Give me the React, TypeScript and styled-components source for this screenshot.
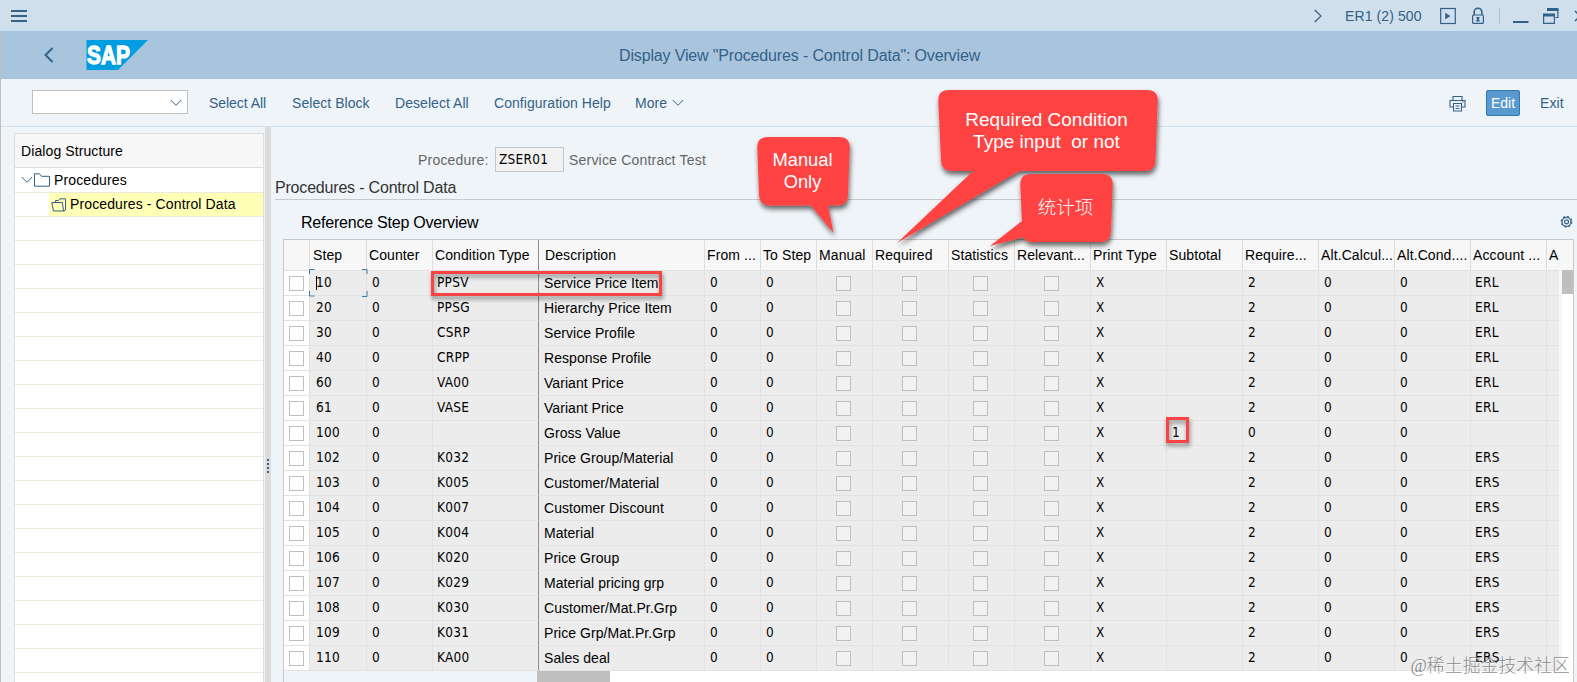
import React from 'react';
import styled, { createGlobalStyle } from 'styled-components';

const Global = createGlobalStyle`
  * { box-sizing: border-box; }
  html, body { margin: 0; overflow: hidden; }
  body { font-family: "Liberation Sans", Arial, sans-serif; font-size: 14px; letter-spacing: 0.1px; color: #000; }
`;

const ink = '#346187';

const Window = styled.div`
  position: relative;
  display: flex;
  flex-direction: column;
  width: 1577px;
  height: 682px;
  background: #eff4f8;
  overflow: hidden;
`;

const TitleBar = styled.header`
  display: flex;
  align-items: center;
  justify-content: space-between;
  flex: none;
  height: 31px;
  padding-left: 11px;
  background: #cfdfec;
  color: ${ink};
`;

const Burger = styled.div`
  display: flex;
  flex-direction: column;
  gap: 3px;
  width: 16px;
  padding-top: 1px;
`;

const BurgerLine = styled.i`
  height: 2px;
  background: ${ink};
`;

const SystemArea = styled.div`
  display: flex;
  align-items: center;
  height: 31px;
  padding-top: 1px;
`;

const SystemName = styled.span`
  width: 95px;
  padding-left: 23px;
  box-sizing: content-box;
  white-space: nowrap;
`;

const Frame = styled.div`
  display: flex;
  flex-direction: column;
  flex: 1;
  min-height: 0;
  border-left: 1px solid #bfbfbf;
`;

const ViewHeader = styled.div`
  display: grid;
  grid-template-columns: 85px 62px 1fr;
  align-items: center;
  flex: none;
  height: 48px;
  background: #a9c5de;
  color: ${ink};
`;

const BackButton = styled.button`
  display: flex;
  justify-content: flex-end;
  width: 53px;
  padding: 0;
  border: 0;
  background: none;
`;

const ViewTitle = styled.h1`
  margin: 0;
  padding: 2px 0 0 471px;
  font-size: 16px;
  font-weight: 400;
  letter-spacing: -0.15px;
  white-space: nowrap;
`;

const Toolbar = styled.div`
  display: flex;
  align-items: flex-start;
  flex: none;
  height: 48px;
  padding: 11px 0 0 31px;
  border-bottom: 1px solid #cfdfec;
  color: ${ink};
`;

const Combo = styled.div`
  display: flex;
  align-items: center;
  justify-content: flex-end;
  width: 156px;
  height: 24px;
  margin-right: 21px;
  padding: 2px 5px 0 0;
  border: 1px solid #bfbfbf;
  background: #fff;
`;

const ToolLink = styled.span<{ $width: number; $tight?: boolean }>`
  display: flex;
  align-items: center;
  gap: 5px;
  flex: none;
  width: ${p => p.$width}px;
  height: 26px;
  letter-spacing: ${p => (p.$tight ? '-0.05px' : '0.05px')};
  white-space: nowrap;
`;

const ToolEnd = styled.div`
  display: flex;
  align-items: center;
  height: 26px;
  margin-left: auto;
`;

const EditButton = styled.button`
  width: 34px;
  height: 26px;
  margin: 0 20px 0 20px;
  padding: 0;
  border: 1px solid #3079b4;
  border-radius: 2px;
  background: #5899d0;
  color: #fff;
  font: inherit;
`;

const ExitLink = styled.span`
  width: 37px;
`;

const Body = styled.div`
  display: flex;
  flex: 1;
  min-height: 0;
`;

const TreePane = styled.aside`
  display: flex;
  flex-direction: column;
  flex: none;
  width: 250px;
  margin: 6px 1px 0 13px;
  border: solid #dedede;
  border-width: 1px 1px 0 1px;
  background: #fff;
`;

const TreeTitle = styled.div`
  display: flex;
  align-items: center;
  flex: none;
  height: 34px;
  padding: 1px 0 0 6px;
  border-bottom: 1px solid #dedede;
  background: #f7f7f7;
  white-space: nowrap;
`;

const TreeRow = styled.div<{ $first?: boolean }>`
  display: flex;
  flex: none;
  height: ${p => (p.$first ? 25 : 24)}px;
  border-bottom: 1px solid #ebebdc;
  letter-spacing: 0.12px;
`;

const TreeItem = styled.div<{ $indent: number; $gap: number; $selected?: boolean }>`
  display: flex;
  align-items: center;
  flex: 1;
  gap: ${p => p.$gap}px;
  margin-left: ${p => p.$indent}px;
  padding-left: 2px;
  background: ${p => (p.$selected ? '#ffffb8' : 'transparent')};
  white-space: nowrap;
`;

const TreeText = styled.span<{ $raise?: boolean }>`
  margin-left: ${p => (p.$raise ? 1 : 3)}px;
  padding-bottom: ${p => (p.$raise ? 2 : 0)}px;
`;

const Splitter = styled.div`
  display: flex;
  flex-direction: column;
  align-items: center;
  gap: 2px;
  flex: none;
  width: 6px;
  padding-top: 332px;
  background: #dcdcdc;
`;

const Grip = styled.i`
  width: 2px;
  height: 2px;
  background: ${ink};
`;

const Content = styled.main`
  display: flex;
  flex-direction: column;
  flex: 1;
  min-width: 0;
`;

const FieldRow = styled.div`
  display: flex;
  align-items: center;
  flex: none;
  height: 25px;
  margin: 20px 0 0 147px;
  color: #666;
  white-space: nowrap;
`;

const FieldLabel = styled.label`
  width: 77px;
  letter-spacing: 0.2px;
`;

const monoText = `
  font-family: "DejaVu Sans Condensed", "DejaVu Sans", sans-serif;
  font-stretch: condensed;
  font-size: 13.5px;
  letter-spacing: 0.28px;
`;

const Field = styled.div`
  ${monoText}
  width: 69px;
  height: 25px;
  margin-right: 5px;
  padding-left: 3px;
  border: 1px solid #c6c6c6;
  background: #f2f2f2;
  color: #000;
  line-height: 22px;
`;

const FieldText = styled.span`
  letter-spacing: 0.2px;
`;

const GroupTitle = styled.h2`
  flex: none;
  height: 28px;
  margin: 0 0 0 4px;
  padding-top: 6px;
  border-bottom: 1px solid #c6c9cc;
  color: #333;
  font-size: 16px;
  line-height: 19px;
  font-weight: 400;
  letter-spacing: -0.19px;
`;

const TableTitle = styled.div`
  display: flex;
  align-items: center;
  justify-content: space-between;
  flex: none;
  height: 39px;
  padding: 6px 4px 0 30px;
  font-size: 16px;
  letter-spacing: -0.22px;
`;

const TableBox = styled.section`
  display: grid;
  grid-template-columns: 1275px 3px 11px;
  grid-template-rows: 431px 12px;
  width: 1291px;
  margin-left: 12px;
  border: solid #c6c9cc;
  border-width: 1px 1px 0 1px;
  flex: none;
`;

const Grid = styled.div`
  overflow: hidden;
`;

const HeadRow = styled.div`
  display: flex;
  height: 31px;
  border-bottom: 1px solid #e2e2e2;
  background: #f7f7f7;
`;

const HeadCell = styled.div<{ $w: number; $strong?: boolean; $pad: number }>`
  flex: none;
  width: ${p => p.$w}px;
  height: 30px;
  padding-left: ${p => p.$pad}px;
  border-right: 1px solid ${p => (p.$strong ? '#8c8c8c' : '#dcdcdc')};
  line-height: 31px;
  letter-spacing: 0.1px;
  white-space: nowrap;
  overflow: hidden;
`;

const Row = styled.div`
  display: flex;
  height: 25px;
  background: #ececec;
`;

const Cell = styled.div<{ $w: number; $strong?: boolean; $select?: boolean; $center?: boolean; $pad?: number }>`
  display: flex;
  justify-content: ${p => (p.$center ? 'center' : 'flex-start')};
  flex: none;
  width: ${p => p.$w}px;
  height: 25px;
  padding-left: ${p => (p.$center ? 0 : p.$pad ?? 5)}px;
  border-right: 1px solid ${p => (p.$strong ? '#8c8c8c' : '#e2e2e2')};
  border-bottom: 1px solid #e2e2e2;
  background: ${p => (p.$select ? '#fff' : 'transparent')};
  white-space: nowrap;
`;

const Code = styled.span`
  ${monoText}
  line-height: 22px;
`;

const Label = styled.span`
  line-height: 25px;
  letter-spacing: 0.05px;
`;

const Check = styled.i<{ $on?: boolean }>`
  width: 15px;
  height: 15px;
  margin: 5px 0 0 ${p => (p.$on ? -1 : -3)}px;
  border: 1px solid #bfbfbf;
  background: ${p => (p.$on ? '#fff' : '#f2f2f2')};
`;

const TrackHead = styled.div`
  height: 30px;
  background: #f7f7f7;
`;

const VTrack = styled.div`
  background: #fff;
`;

const VThumb = styled.div`
  height: 24px;
  background: #bfbfbf;
`;

const HTrack = styled.div`
  display: flex;
  margin-left: 253px;
  background: #fff;
`;

const HThumb = styled.div`
  width: 73px;
  background: #bfbfbf;
`;

const Gutter = styled.div`
  background: #f3f7fa;
`;

const Corner = styled.div`
  background: #fff;
`;

const Mark = styled.div<{ $x: number; $y: number; $w: number; $h: number }>`
  position: absolute;
  left: ${p => p.$x}px;
  top: ${p => p.$y}px;
  width: ${p => p.$w}px;
  height: ${p => p.$h}px;
  border: 3px solid #fb4344;
  filter: drop-shadow(1px 3px 2px rgba(0, 0, 0, 0.45));
`;

const Overlay = styled.svg`
  position: absolute;
  left: 0;
  top: 0;
  pointer-events: none;
`;

const Note = styled.div<{ $x: number; $y: number; $w: number; $size?: number }>`
  position: absolute;
  left: ${p => p.$x}px;
  top: ${p => p.$y}px;
  width: ${p => p.$w}px;
  color: #fff;
  font-family: "Liberation Sans", "Noto Sans CJK SC", sans-serif;
  font-size: ${p => p.$size ?? 19}px;
  font-weight: 300;
  line-height: 22px;
  letter-spacing: 0;
  text-align: center;
  white-space: pre;
`;

const Watermark = styled.div`
  position: absolute;
  right: 7px;
  bottom: 3px;
  color: rgba(90, 90, 90, 0.7);
  font-family: "Liberation Serif", "Noto Sans CJK SC", serif;
  font-size: 17.9px;
  font-weight: 300;
  line-height: 26px;
  letter-spacing: 0;
  text-shadow: 1px 1px 0 rgba(255, 255, 255, 0.7);
  white-space: nowrap;
`;

const Chevron = ({ size = 12, color = ink }: { size?: number; color?: string }) => (
  <svg width={size} height="8" viewBox="0 0 12 8" fill="none" stroke={color} strokeWidth="1">
    <path d="M.8 1 6 6.3 11.2 1" />
  </svg>
);

const SapLogo = () => (
  <svg width="62" height="30" viewBox="0 0 62 30">
    <path d="M.5 0H62L32 30H.5Z" fill="#009de0" />
    <text x="1" y="24" fill="#fff" stroke="#fff" strokeWidth="1.300" fontFamily="Liberation Sans" fontWeight="700" fontSize="26" textLength="43" lengthAdjust="spacingAndGlyphs">SAP</text>
  </svg>
);

const SystemIcons = () => (
  <svg width="137" height="18" viewBox="0 0 137 18" fill="none" stroke={ink}>
    <rect x=".7" y="1.500" width="14.600" height="15" strokeWidth="1.200" />
    <path d="M5.200 5.800v6.600L10.400 9Z" fill={ink} stroke="none" />
    <path d="M34.200 8V5a3.800 3.800 0 0 1 7.600 0v3" strokeWidth="1.600" />
    <rect x="32.600" y="8" width="10.800" height="8.400" rx="1" strokeWidth="1.200" />
    <path d="M36.400 10h3v2h-.6v1h.8v1.400h-3.400V13h.8v-1.400h-.6Z" fill={ink} stroke="none" />
    <path d="M59.500 1v16" stroke="#b4bcc4" />
    <path d="M73 15h15.500" strokeWidth="2" />
    <path d="M117.900 2v8.500h-2.500" strokeWidth="1.200" />
    <path d="M107 2.500h11.500" strokeWidth="3" />
    <path d="M103 8h12" strokeWidth="3" />
    <path d="M103.600 8v8.400h10.800V8" strokeWidth="1.200" />
    <path d="m135 4 5 5-5 5" strokeWidth="1.500" />
  </svg>
);

const Printer = () => (
  <svg width="17" height="17" viewBox="0 0 17 17" fill="none" stroke={ink} strokeWidth="1.100">
    <path d="M4 5V1.500h9V5M4 12H1V5.500h15V12h-3" />
    <path d="M4.500 8.500h8v7.500h-8ZM6.500 11h4M6.500 13.500h4" />
    <path d="M13 7h1.500" />
  </svg>
);

const Folder = () => (
  <svg width="16" height="14" viewBox="0 0 16 14" fill="none" stroke={ink} strokeWidth="1">
    <path d="M.5 13.200V.8h5l2 2.500h8v9.900Z" />
  </svg>
);

const OpenFolder = () => (
  <svg width="16" height="14" viewBox="0 0 16 14" fill="none" stroke={ink} strokeWidth="1">
    <path d="M2.500 13 .8 4.500h10.500L12.600 13ZM4.500 4.500V2.500h3L9 .8h5.500V12l-2 1" />
  </svg>
);

const Gear = () => (
  <svg width="13" height="13" viewBox="0 0 13 13" fill="none" stroke={ink}>
    <circle cx="6.500" cy="5.800" r="4.500" strokeWidth="1.200" />
    <circle cx="6.500" cy="5.800" r="5.300" strokeWidth="1.200" strokeDasharray="2.080 2.080" />
    <circle cx="6.500" cy="5.800" r="2" strokeWidth="1.200" />
  </svg>
);

type Column = { title: string; w: number; strong?: boolean; pad?: number; cellPad?: number };

const columns: Column[] = [
  { title: 'Step', w: 57, pad: 3, cellPad: 6 },
  { title: 'Counter', w: 66 },
  { title: 'Condition Type', w: 106, strong: true, cellPad: 4 },
  { title: 'Description', w: 166, pad: 6 },
  { title: 'From ...', w: 56 },
  { title: 'To Step', w: 56, pad: 2 },
  { title: 'Manual', w: 56 },
  { title: 'Required', w: 76 },
  { title: 'Statistics', w: 66 },
  { title: 'Relevant...', w: 76 },
  { title: 'Print Type', w: 76 },
  { title: 'Subtotal', w: 76 },
  { title: 'Require...', w: 76 },
  { title: 'Alt.Calcul...', w: 76 },
  { title: 'Alt.Cond....', w: 76 },
  { title: 'Account ...', w: 76, cellPad: 4 },
  { title: 'A', w: 14 },
];

const records: [string, string, string, string][] = [
  ['10', 'PPSV', 'Service Price Item', 'ERL'],
  ['20', 'PPSG', 'Hierarchy Price Item', 'ERL'],
  ['30', 'CSRP', 'Service Profile', 'ERL'],
  ['40', 'CRPP', 'Response Profile', 'ERL'],
  ['60', 'VA00', 'Variant Price', 'ERL'],
  ['61', 'VASE', 'Variant Price', 'ERL'],
  ['100', '', 'Gross Value', ''],
  ['102', 'K032', 'Price Group/Material', 'ERS'],
  ['103', 'K005', 'Customer/Material', 'ERS'],
  ['104', 'K007', 'Customer Discount', 'ERS'],
  ['105', 'K004', 'Material', 'ERS'],
  ['106', 'K020', 'Price Group', 'ERS'],
  ['107', 'K029', 'Material pricing grp', 'ERS'],
  ['108', 'K030', 'Customer/Mat.Pr.Grp', 'ERS'],
  ['109', 'K031', 'Price Grp/Mat.Pr.Grp', 'ERS'],
  ['110', 'KA00', 'Sales deal', 'ERS'],
];

const DataRow = ({ record }: { record: (typeof records)[number] }) => {
  const [step, type, description, account] = record;
  const gross = type === '';
  const values = [step, '0', type, description, '0', '0', null, null, null, null, 'X', gross ? '1' : '', gross ? '0' : '2', '0', '0', account, ''];
  return (
    <Row>
      <Cell $w={26} $select $center><Check $on /></Cell>
      {columns.map((c, i) => (
        <Cell key={c.title} $w={c.w} $strong={c.strong} $center={values[i] === null} $pad={c.cellPad}>
          {values[i] === null ? <Check /> : i === 3 ? <Label>{values[i]}</Label> : <Code>{values[i]}</Code>}
        </Cell>
      ))}
    </Row>
  );
};

export default function App() {
  return (
    <Window>
      <Global />
      <TitleBar>
        <Burger><BurgerLine /><BurgerLine /><BurgerLine /></Burger>
        <SystemArea>
          <svg width="8" height="14" viewBox="0 0 8 14" fill="none" stroke={ink} strokeWidth="1.100"><path d="M.8 1 7 7 .8 13" /></svg>
          <SystemName>ER1 (2) 500</SystemName>
          <SystemIcons />
        </SystemArea>
      </TitleBar>
      <Frame>
        <ViewHeader>
          <BackButton>
            <svg width="10" height="16" viewBox="0 0 10 16" fill="none" stroke={ink} strokeWidth="2"><path d="M8.500 1 1.500 8l7 7" /></svg>
          </BackButton>
          <SapLogo />
          <ViewTitle>Display View "Procedures - Control Data": Overview</ViewTitle>
        </ViewHeader>
        <Toolbar>
          <Combo><Chevron /></Combo>
          <ToolLink $width={83} $tight>Select All</ToolLink>
          <ToolLink $width={103}>Select Block</ToolLink>
          <ToolLink $width={99}>Deselect All</ToolLink>
          <ToolLink $width={141}>Configuration Help</ToolLink>
          <ToolLink $width={60}>More <Chevron /></ToolLink>
          <ToolEnd>
            <Printer />
            <EditButton>Edit</EditButton>
            <ExitLink>Exit</ExitLink>
          </ToolEnd>
        </Toolbar>
        <Body>
          <TreePane>
            <TreeTitle>Dialog Structure</TreeTitle>
            <TreeRow $first>
              <TreeItem $indent={4} $gap={1}><Chevron /><Folder /><TreeText>Procedures</TreeText></TreeItem>
            </TreeRow>
            <TreeRow>
              <TreeItem $indent={34} $gap={2} $selected><OpenFolder /><TreeText $raise>Procedures - Control Data</TreeText></TreeItem>
            </TreeRow>
            {Array.from({ length: 20 }, (_, i) => <TreeRow key={i} />)}
          </TreePane>
          <Splitter><Grip /><Grip /><Grip /><Grip /></Splitter>
          <Content>
            <FieldRow>
              <FieldLabel>Procedure:</FieldLabel>
              <Field>ZSER01</Field>
              <FieldText>Service Contract Test</FieldText>
            </FieldRow>
            <GroupTitle>Procedures - Control Data</GroupTitle>
            <TableTitle>Reference Step Overview<Gear /></TableTitle>
            <TableBox>
              <Grid>
                <HeadRow>
                  <HeadCell $w={26} $pad={0} />
                  {columns.map(c => (
                    <HeadCell key={c.title} $w={c.w} $strong={c.strong} $pad={c.pad ?? 2}>{c.title}</HeadCell>
                  ))}
                </HeadRow>
                {records.map(r => <DataRow key={r[0]} record={r} />)}
              </Grid>
              <Gutter />
              <VTrack><TrackHead /><VThumb /></VTrack>
              <HTrack><HThumb /></HTrack>
              <Corner />
              <Corner />
            </TableBox>
          </Content>
        </Body>
      </Frame>

      <Mark $x={431} $y={271} $w={231} $h={25} />
      <Mark $x={1166} $y={417} $w={23} $h={26} />
      <Overlay width="1577" height="682" viewBox="0 0 1577 682">
        <defs>
          <filter id="drop" x="-20%" y="-20%" width="140%" height="150%">
            <feDropShadow dx="1" dy="3.500" stdDeviation="2.500" floodColor="#000" floodOpacity="0.600" />
          </filter>
        </defs>
        <path d="M309.500 274v-4.500h5M362 269.500h5V274M309.500 291v5h5M362 296.500h5V291" fill="none" stroke="#3f7cb0" />
        <path d="M316.500 276v14" stroke="#000" />
        <g fill="#ff4343">
          <path filter="url(#drop)" d="M768 137H839Q850 137 849.700 148L848 195Q847.500 205.500 838 205.500H828L833.500 233 811 205.500H770Q759.500 205.500 759 195L757.300 148Q757 137 768 137Z" />
          <path filter="url(#drop)" d="M949 90H1147Q1158 90 1157.700 101L1155.500 160Q1155 171 1145 171H1019L897 243 973 171H952Q941.500 171 941 160L938.300 101Q938 90 949 90Z" />
          <path filter="url(#drop)" d="M1031 174H1102Q1113 174 1112.700 185L1111 231Q1110.500 242 1101 242H1033Q1025 242 1024 237L990 246 1022 221 1020.300 185Q1020 174 1031 174Z" />
        </g>
      </Overlay>
      <Note $x={757} $y={149} $w={91} $size={18.3}>{'Manual\nOnly'}</Note>
      <Note $x={938} $y={109} $w={217}>{'Required Condition\nType input  or not'}</Note>
      <Note $x={1020} $y={197} $w={91} $size={18.5}>统计项</Note>
      <Watermark>@稀土掘金技术社区</Watermark>
    </Window>
  );
}
